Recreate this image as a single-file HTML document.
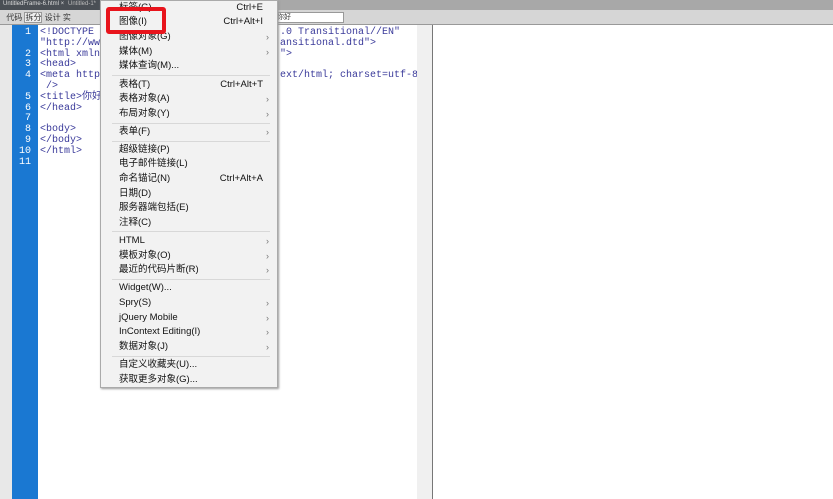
<html><head><style>
body{margin:0;width:833px;height:499px;overflow:hidden;background:#fff;position:relative;font-family:"Liberation Sans","Noto Sans CJK SC",sans-serif}
.a{position:absolute}
.code{font-family:"Liberation Mono",monospace;font-size:10px;color:#3a3a9a;white-space:pre;line-height:10.8px}
.ln{font-family:"Liberation Mono",monospace;font-size:10px;color:#fff;text-align:right;line-height:10.8px;white-space:pre}
.m{font-size:9.5px;color:#111;left:119px;position:absolute;line-height:12px}
.s{position:absolute;font-size:9.5px;line-height:12px;color:#111}
.r{position:absolute;left:266px;font-size:9px;color:#777;line-height:12px}
.sep{position:absolute;left:112px;width:158px;height:1px;background:#d8d8d8}
#mm{position:absolute;left:0;top:2px;width:833px;height:400px}
</style></head><body>
<div class="a" style="left:0;top:0;width:833px;height:10px;background:#a8a8a8"></div>
<div class="a" style="left:0;top:0;width:120px;height:10px;background:#4a4f55"></div>
<div class="a" style="left:3px;top:1px;font-size:6px;color:#ddd">UntitledFrame-6.html ×</div>
<div class="a" style="left:68px;top:1px;font-size:6px;color:#bbb">Untitled-1*</div>
<div class="a" style="left:0;top:10px;width:833px;height:14px;background:#d6d6d6;border-bottom:1px solid #999"></div>
<div class="a" style="left:4px;top:12px;font-size:8px;color:#333">&nbsp;代码 <span style="border:1px solid #999;background:#eee">拆分</span> 设计 实</div>
<div class="a" style="left:276px;top:12px;width:66px;height:9px;background:#fff;border:1px solid #999;font-size:7px;line-height:9px;color:#333">你好</div>
<div class="a" style="left:0;top:25px;width:12px;height:474px;background:#e8e8e8"></div>
<div class="a" style="left:12px;top:25px;width:26px;height:474px;background:#1a78d2"></div>
<div class="a ln" style="left:12px;top:28px;width:19px">1

2
3
4

5
6
7
8
9
10
11</div>
<div class="a code" style="left:40px;top:28px">&lt;!DOCTYPE h                             .0 Transitional//EN"
"http://www                             ansitional.dtd"&gt;
&lt;html xmlns                             "&gt;
&lt;head&gt;
&lt;meta http-                             ext/html; charset=utf-8"
 /&gt;
&lt;title&gt;你好
&lt;/head&gt;

&lt;body&gt;
&lt;/body&gt;
&lt;/html&gt;</div>
<div class="a" style="left:417px;top:25px;width:15px;height:474px;background:#f0f0f0"></div>
<div class="a" style="left:432px;top:25px;width:1px;height:474px;background:#777"></div>
<div class="a" style="left:100px;top:0;width:176px;height:386px;background:#f2f2f2;border:1px solid #aaa;box-shadow:1px 1px 2px #999"></div>
<div id="mm">
<div class="m" style="top:0">标签(G)</div><div class="s" style="top:0;right:570px">Ctrl+E</div>
<div class="m" style="top:14px">图像(I)</div><div class="s" style="top:14px;right:570px">Ctrl+Alt+I</div>
<div class="m" style="top:29px">图像对象(G)</div><div class="r" style="top:29px">›</div>
<div class="m" style="top:44px">媒体(M)</div><div class="r" style="top:44px">›</div>
<div class="m" style="top:58px">媒体查询(M)...</div>
<div class="sep" style="top:73px"></div>
<div class="m" style="top:77px">表格(T)</div><div class="s" style="top:77px;right:570px">Ctrl+Alt+T</div>
<div class="m" style="top:91px">表格对象(A)</div><div class="r" style="top:91px">›</div>
<div class="m" style="top:106px">布局对象(Y)</div><div class="r" style="top:106px">›</div>
<div class="sep" style="top:121px"></div>
<div class="m" style="top:124px">表单(F)</div><div class="r" style="top:124px">›</div>
<div class="sep" style="top:139px"></div>
<div class="m" style="top:142px">超级链接(P)</div>
<div class="m" style="top:156px">电子邮件链接(L)</div>
<div class="m" style="top:171px">命名锚记(N)</div><div class="s" style="top:171px;right:570px">Ctrl+Alt+A</div>
<div class="m" style="top:186px">日期(D)</div>
<div class="m" style="top:200px">服务器端包括(E)</div>
<div class="m" style="top:215px">注释(C)</div>
<div class="sep" style="top:229px"></div>
<div class="m" style="top:233px">HTML</div><div class="r" style="top:233px">›</div>
<div class="m" style="top:248px">模板对象(O)</div><div class="r" style="top:248px">›</div>
<div class="m" style="top:262px">最近的代码片断(R)</div><div class="r" style="top:262px">›</div>
<div class="sep" style="top:277px"></div>
<div class="m" style="top:280px">Widget(W)...</div>
<div class="m" style="top:295px">Spry(S)</div><div class="r" style="top:295px">›</div>
<div class="m" style="top:310px">jQuery Mobile</div><div class="r" style="top:310px">›</div>
<div class="m" style="top:324px">InContext Editing(I)</div><div class="r" style="top:324px">›</div>
<div class="m" style="top:339px">数据对象(J)</div><div class="r" style="top:339px">›</div>
<div class="sep" style="top:354px"></div>
<div class="m" style="top:357px">自定义收藏夹(U)...</div>
<div class="m" style="top:372px">获取更多对象(G)...</div>
</div>
<div class="a" style="left:106px;top:7px;width:52px;height:19px;border:4px solid #e8141c;border-radius:3px"></div>
</body></html>
